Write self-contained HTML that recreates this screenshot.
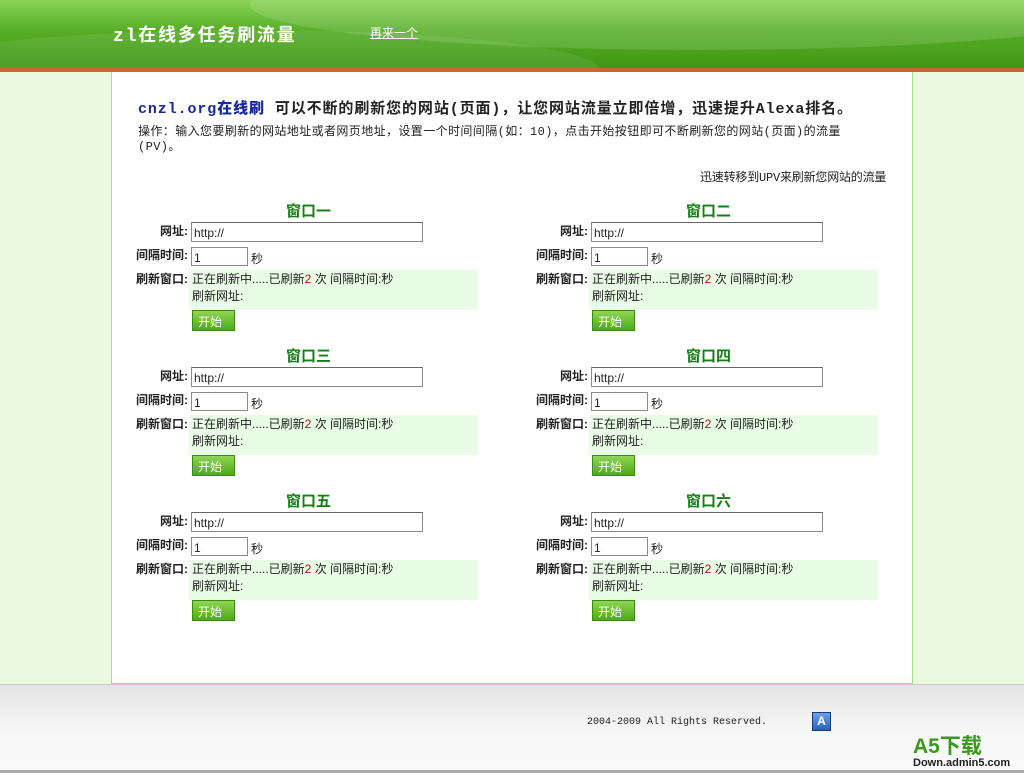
<!DOCTYPE html>
<html><head><meta charset="utf-8">
<style>
*{margin:0;padding:0;box-sizing:border-box}
body{width:1024px;height:773px;overflow:hidden;background:#eaf9e0;font-family:"Liberation Sans","Noto Sans CJK SC",sans-serif;font-size:12px;color:#222;position:relative}
.hd{position:absolute;left:0;top:0;width:1024px;height:68px;background:linear-gradient(180deg,#8ad456 0%,#56ae26 45%,#3f9716 100%);overflow:hidden}
.hd .sw{position:absolute;left:250px;top:-40px;width:900px;height:90px;border-radius:50%;background:rgba(255,255,255,.13)}
.hd .sw2{position:absolute;left:-100px;top:30px;width:700px;height:80px;border-radius:50%;background:rgba(255,255,255,.08)}
.ol{position:absolute;left:0;top:68px;width:1024px;height:4px;background:#c56a34}
.ttl{position:absolute;left:113px;top:21px;color:#fff;font-size:18px;font-weight:bold;font-family:"Liberation Mono","Noto Sans CJK SC",monospace;letter-spacing:1.8px}
.again{position:absolute;left:370px;top:24px;color:#fff;text-decoration:underline;font-size:12px}
.panel{position:absolute;left:111px;top:72px;width:802px;height:612px;background:#fff;border:1px solid #a6dc8a;border-top:none}
.ft{position:absolute;left:0;top:684px;width:1024px;height:89px;background:linear-gradient(180deg,#e4e4e4,#f8f8f8 60%,#fafafa);border-top:1px solid #c8c8c8;border-bottom:3px solid #aaa}
.h1{position:absolute;left:138px;top:97px;font-size:15px;font-weight:bold;font-family:"Liberation Mono","Noto Sans CJK SC",monospace;white-space:nowrap;letter-spacing:0.9px}
.h1 b{color:#1a28a0}
.op{position:absolute;left:138px;top:125px;width:745px;font-size:12px;line-height:15px;font-family:"Liberation Mono","Noto Sans CJK SC",monospace;letter-spacing:0.4px}
.upv{position:absolute;left:700px;top:168px;font-size:12px;font-family:"Liberation Mono","Noto Sans CJK SC",monospace;letter-spacing:-0.2px}
.w{position:absolute;width:360px;height:140px}
.w .t{position:absolute;left:153px;top:0;color:#138013;font-weight:bold;font-size:15px}
.w .l{position:absolute;width:60px;text-align:right;font-weight:bold;left:-5px}
.w .u{position:absolute;left:58px;top:22px;width:232px;height:20px;border:1px solid #8a8a8a;border-top-color:#666;padding:3px 2px;font-size:12px;background:#fff}
.w .i{position:absolute;left:58px;top:47px;width:57px;height:19px;border:1px solid #8a8a8a;padding:3px 2px;background:#fff}
.w .s{position:absolute;left:118px;top:50px}
.w .g{position:absolute;left:56px;top:70px;width:289px;height:40px;background:#e9fde6;padding:1px 3px;line-height:17px}
.w .g span{color:#c01010}
.w .btn{position:absolute;left:59px;top:110px;width:43px;height:21px;background:linear-gradient(#8fd653,#4fa81c);border:1px solid #3c8a12;color:#fff;padding:2px 0 0 5px}
.cp{position:absolute;left:587px;top:717px;font-family:"Liberation Mono",monospace;font-size:10px;color:#222}
.ai{position:absolute;left:812px;top:712px;width:19px;height:19px;background:linear-gradient(#6aa3e8,#2860b8);border:1px solid #173b78;color:#fff;font-weight:bold;text-align:center;font-size:12px;line-height:17px}
.a5{position:absolute;left:913px;top:736px;color:#3a9a1a;font-size:21px;font-weight:bold;line-height:22px}
.dn{position:absolute;left:913px;top:757px;font-size:11px;font-weight:bold;color:#222}
</style></head><body>
<div class="hd"><div class="sw"></div><div class="sw2"></div></div>
<div class="ol"></div>
<div class="ttl">zl在线多任务刷流量</div>
<div class="again">再来一个</div>
<div class="panel"></div>
<div class="h1"><b>cnzl.org在线刷</b> 可以不断的刷新您的网站(页面)，让您网站流量立即倍增，迅速提升Alexa排名。</div>
<div class="op">操作：输入您要刷新的网站地址或者网页地址，设置一个时间间隔(如：10)，点击开始按钮即可不断刷新您的网站(页面)的流量(PV)。</div>
<div class="upv">迅速转移到UPV来刷新您网站的流量</div>

<div class="w" style="left:133px;top:200px"><div class="t">窗口一</div><div class="l" style="top:22px">网址:</div><div class="u">http://</div><div class="l" style="top:46px">间隔时间:</div><div class="i">1</div><div class="s">秒</div><div class="l" style="top:70px">刷新窗口:</div><div class="g">正在刷新中.....已刷新<span>2</span> 次 间隔时间:秒<br>刷新网址:</div><div class="btn">开始</div></div>
<div class="w" style="left:533px;top:200px"><div class="t">窗口二</div><div class="l" style="top:22px">网址:</div><div class="u">http://</div><div class="l" style="top:46px">间隔时间:</div><div class="i">1</div><div class="s">秒</div><div class="l" style="top:70px">刷新窗口:</div><div class="g">正在刷新中.....已刷新<span>2</span> 次 间隔时间:秒<br>刷新网址:</div><div class="btn">开始</div></div>
<div class="w" style="left:133px;top:345px"><div class="t">窗口三</div><div class="l" style="top:22px">网址:</div><div class="u">http://</div><div class="l" style="top:46px">间隔时间:</div><div class="i">1</div><div class="s">秒</div><div class="l" style="top:70px">刷新窗口:</div><div class="g">正在刷新中.....已刷新<span>2</span> 次 间隔时间:秒<br>刷新网址:</div><div class="btn">开始</div></div>
<div class="w" style="left:533px;top:345px"><div class="t">窗口四</div><div class="l" style="top:22px">网址:</div><div class="u">http://</div><div class="l" style="top:46px">间隔时间:</div><div class="i">1</div><div class="s">秒</div><div class="l" style="top:70px">刷新窗口:</div><div class="g">正在刷新中.....已刷新<span>2</span> 次 间隔时间:秒<br>刷新网址:</div><div class="btn">开始</div></div>
<div class="w" style="left:133px;top:490px"><div class="t">窗口五</div><div class="l" style="top:22px">网址:</div><div class="u">http://</div><div class="l" style="top:46px">间隔时间:</div><div class="i">1</div><div class="s">秒</div><div class="l" style="top:70px">刷新窗口:</div><div class="g">正在刷新中.....已刷新<span>2</span> 次 间隔时间:秒<br>刷新网址:</div><div class="btn">开始</div></div>
<div class="w" style="left:533px;top:490px"><div class="t">窗口六</div><div class="l" style="top:22px">网址:</div><div class="u">http://</div><div class="l" style="top:46px">间隔时间:</div><div class="i">1</div><div class="s">秒</div><div class="l" style="top:70px">刷新窗口:</div><div class="g">正在刷新中.....已刷新<span>2</span> 次 间隔时间:秒<br>刷新网址:</div><div class="btn">开始</div></div>

<div class="ft"></div>
<div class="cp">2004-2009 All Rights Reserved.</div>
<div class="ai">A</div>
<div class="a5">A5下载</div>
<div class="dn">Down.admin5.com</div>
</body></html>
